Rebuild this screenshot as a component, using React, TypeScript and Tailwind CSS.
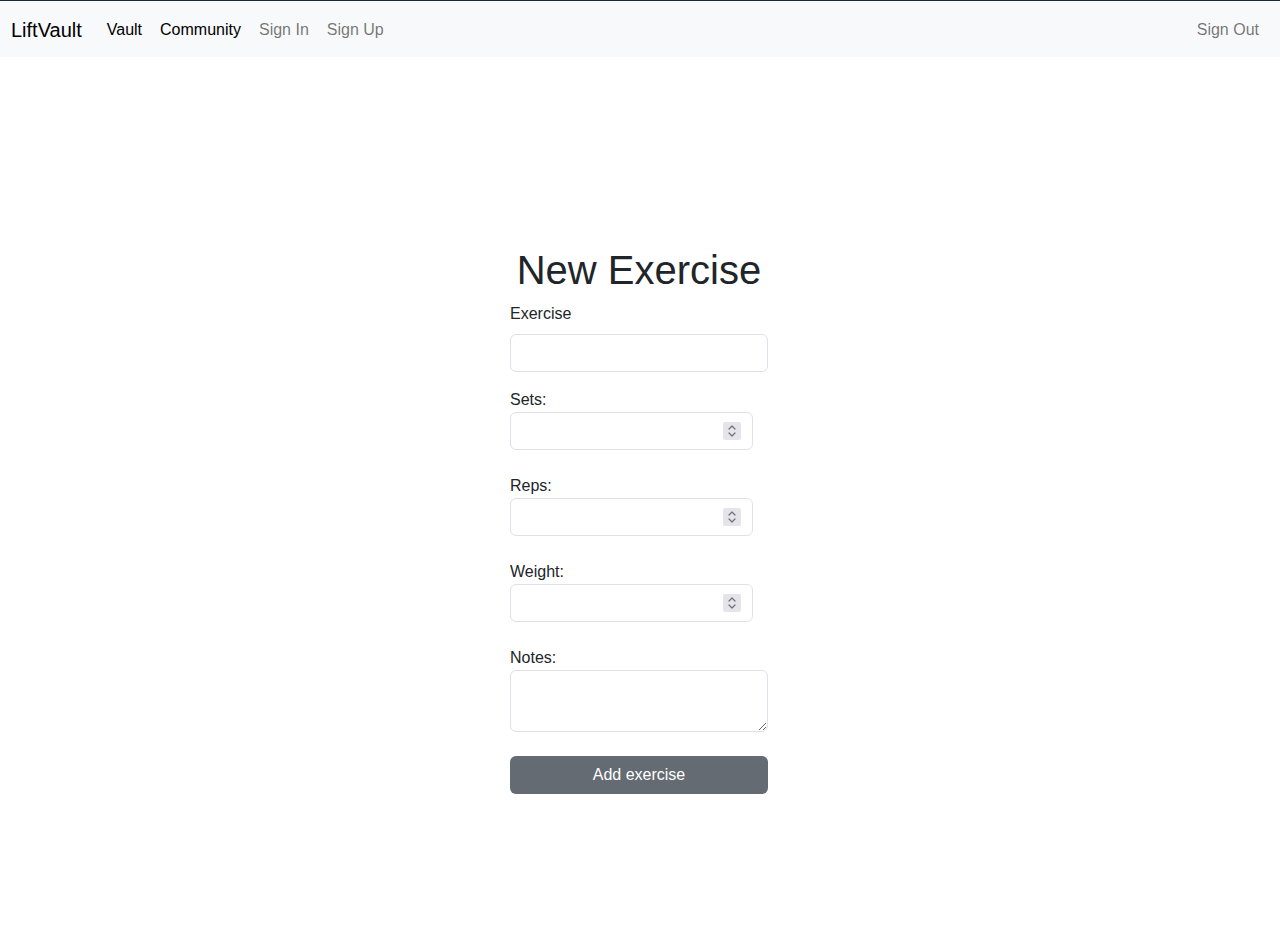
import React from 'react';

const NumberField: React.FC<{ label: string; id: string }> = ({ label, id }) => (
  <div className="flex flex-col">
    <label htmlFor={id} className="leading-6 text-[#212529]">{label}</label>
    <div className="relative w-[243px]">
      <input
        id={id}
        type="text"
        className="w-full h-[38px] rounded-[6px] border border-[#dee2e6] bg-white px-3 outline-none"
      />
      <span className="absolute right-[12px] top-[10px] w-[18px] h-[18px] rounded-[2px] bg-[#e4e4ea] flex items-center justify-center">
        <svg width="10" height="14" viewBox="0 0 10 14" fill="none" stroke="#6f6f76" strokeWidth="1.2" strokeLinecap="round" strokeLinejoin="round">
          <path d="M2 5 L5 2 L8 5" />
          <path d="M2 9 L5 12 L8 9" />
        </svg>
      </span>
    </div>
  </div>
);

const App: React.FC = () => {
  return (
    <div className="min-h-[937px] bg-white border-t border-[#1c2a33] font-['Liberation_Sans',Arial,sans-serif] text-[16px] text-[#212529]">
      <nav className="h-[56px] bg-[#f8f9fa] flex items-center pt-[2px] pl-[11px] pr-[13px]">
        <span className="text-[20px] text-black mr-[16px]">LiftVault</span>
        <div className="flex items-center">
          <span className="px-[9px] text-black">Vault</span>
          <span className="px-[9px] text-black">Community</span>
          <span className="px-[9px] text-black/55">Sign In</span>
          <span className="px-[9px] text-black/55">Sign Up</span>
        </div>
        <span className="ml-auto px-2 text-black/55">Sign Out</span>
      </nav>

      <main className="flex justify-center pt-[189px] pr-[2px]">
        <div className="w-[258px] flex flex-col">
          <h1 className="text-[40px] leading-[48px] text-center mb-2 -mx-8 whitespace-nowrap">New Exercise</h1>
          <label htmlFor="exercise" className="leading-6 mb-2">Exercise</label>
          <input
            id="exercise"
            type="text"
            className="w-full h-[38px] rounded-[6px] border border-[#dee2e6] px-3 outline-none mb-4"
          />
          <div className="flex flex-col gap-6">
            <NumberField label="Sets:" id="sets" />
            <NumberField label="Reps:" id="reps" />
            <NumberField label="Weight:" id="weight" />
            <div className="flex flex-col">
              <label htmlFor="notes" className="leading-6">Notes:</label>
              <textarea
                id="notes"
                className="w-full h-[62px] rounded-[6px] border border-[#dee2e6] px-3 py-1 outline-none block"
              />
            </div>
            <button className="w-full h-[38px] rounded-[6px] bg-[#646b73] text-white">Add exercise</button>
          </div>
        </div>
      </main>
    </div>
  );
};

export default App;
